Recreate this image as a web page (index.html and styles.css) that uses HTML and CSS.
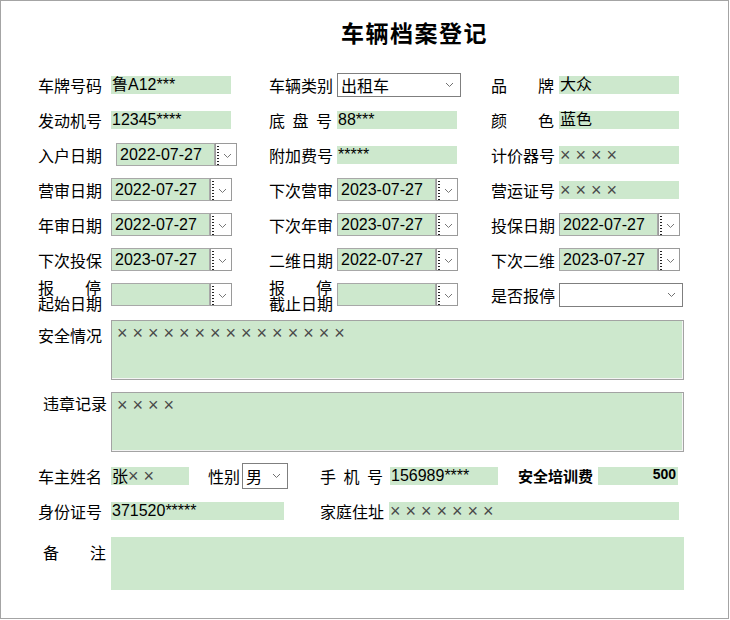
FILE: index.html
```html
<!DOCTYPE html>
<html lang="zh-CN">
<head>
    <meta charset="UTF-8">
    <meta name="viewport" content="width=device-width, initial-scale=1.0">
    <link rel="stylesheet" href="styles.css">
    <title>车辆档案登记</title>
</head>
<body>

<div class="frame">
    <h1 class="title">车辆档案登记</h1>

    <div class="grid">
        <!-- row 1 -->
        <div class="cell c1"><label class="lbl">车牌号码</label><span class="box">鲁A12***</span></div>
        <div class="cell"><label class="lbl">车辆类别</label>
            <span class="select">出租车<svg class="chev" width="9" height="6" viewBox="0 0 9 6"><path d="M1 1l3.5 3.5L8 1"/></svg></span></div>
        <div class="cell"><label class="lbl spread">品牌</label><span class="box">大众</span></div>

        <!-- row 2 -->
        <div class="cell c1"><label class="lbl">发动机号</label><span class="box">12345****</span></div>
        <div class="cell"><label class="lbl spread">底盘号</label><span class="box">88***</span></div>
        <div class="cell"><label class="lbl spread">颜色</label><span class="box">蓝色</span></div>

        <!-- row 3 -->
        <div class="cell c1"><label class="lbl">入户日期</label>
            <span class="date nudge"><span class="dval">2022-07-27</span><span class="dbtn"></span></span></div>
        <div class="cell"><label class="lbl">附加费号</label><span class="box">*****</span></div>
        <div class="cell"><label class="lbl">计价器号</label><span class="box"><span class="mask">××××</span></span></div>

        <!-- row 4 -->
        <div class="cell c1"><label class="lbl">营审日期</label>
            <span class="date"><span class="dval">2022-07-27</span><span class="dbtn"></span></span></div>
        <div class="cell"><label class="lbl">下次营审</label>
            <span class="date"><span class="dval">2023-07-27</span><span class="dbtn"></span></span></div>
        <div class="cell"><label class="lbl">营运证号</label><span class="box"><span class="mask">××××</span></span></div>

        <!-- row 5 -->
        <div class="cell c1"><label class="lbl">年审日期</label>
            <span class="date"><span class="dval">2022-07-27</span><span class="dbtn"></span></span></div>
        <div class="cell"><label class="lbl">下次年审</label>
            <span class="date"><span class="dval">2023-07-27</span><span class="dbtn"></span></span></div>
        <div class="cell"><label class="lbl">投保日期</label>
            <span class="date"><span class="dval">2022-07-27</span><span class="dbtn"></span></span></div>

        <!-- row 6 -->
        <div class="cell c1"><label class="lbl">下次投保</label>
            <span class="date"><span class="dval">2023-07-27</span><span class="dbtn"></span></span></div>
        <div class="cell"><label class="lbl">二维日期</label>
            <span class="date"><span class="dval">2022-07-27</span><span class="dbtn"></span></span></div>
        <div class="cell"><label class="lbl">下次二维</label>
            <span class="date"><span class="dval">2023-07-27</span><span class="dbtn"></span></span></div>

        <!-- row 7 -->
        <div class="cell c1"><label class="lbl two"><span class="top">报停</span>起始日期</label>
            <span class="date"><span class="dval"></span><span class="dbtn"></span></span></div>
        <div class="cell"><label class="lbl two"><span class="top">报停</span>截止日期</label>
            <span class="date"><span class="dval"></span><span class="dbtn"></span></span></div>
        <div class="cell"><label class="lbl">是否报停</label>
            <span class="select"><svg class="chev" width="9" height="6" viewBox="0 0 9 6"><path d="M1 1l3.5 3.5L8 1"/></svg></span></div>
    </div>

    <div class="memo-row first">
        <label class="lbl memo-lbl">安全情况</label>
        <div class="memo"><span class="mask">×××××××××××××××</span></div>
    </div>

    <div class="memo-row second">
        <label class="lbl memo-lbl shift">违章记录</label>
        <div class="memo"><span class="mask">××××</span></div>
    </div>

    <div class="line owner">
        <label class="lbl">车主姓名</label>
        <span class="box w78">张<span class="mask">××</span></span>
        <label class="lbl short">性别</label>
        <span class="select sex">男<svg class="chev" width="9" height="6" viewBox="0 0 9 6"><path d="M1 1l3.5 3.5L8 1"/></svg></span>
        <label class="lbl spread phone">手机号</label>
        <span class="box w108">156989****</span>
        <label class="lbl fee">安全培训费</label>
        <span class="box fee-val">500</span>
    </div>

    <div class="line idcard">
        <label class="lbl">身份证号</label>
        <span class="box w173">371520*****</span>
        <label class="lbl addr">家庭住址</label>
        <span class="box w290"><span class="mask">×××××××</span></span>
    </div>

    <div class="memo-row remark">
        <label class="lbl spread memo-lbl shift">备注</label>
        <div class="memo flat"></div>
    </div>
</div>

</body>
</html>
```

FILE: styles.css
```css
body {
    margin: 0;
    background-color: #fff;
    color: #000;
    font-family: "Noto Sans CJK SC", sans-serif;
    font-size: 16px;
}

.frame {
    width: 729px;
    height: 619px;
    box-sizing: border-box;
    border: 1px solid #a4a4a4;
}

.title {
    margin: 0;
    height: 50px;
    padding: 16px 0 0 340px;
    font-size: 23px;
    line-height: 30px;
    font-weight: bold;
    letter-spacing: 1.5px;
}

/* upper block: three columns of label + control */
.grid {
    display: grid;
    grid-template-columns: 231px 222px 238px;
    grid-auto-rows: 35px;
    margin-left: 37px;
}

.cell {
    display: flex;
    align-items: center;
    gap: 5px;
}

.c1 {
    gap: 10px;
}

.lbl {
    flex: none;
    width: 63px;
    line-height: 22px;
    white-space: nowrap;
}

.spread {
    text-align: justify;
    text-align-last: justify;
}

.two {
    line-height: 16px;
}

.two .top {
    display: block;
    text-align-last: justify;
}

/* green text fields */
.box {
    flex: none;
    display: block;
    width: 120px;
    height: 18px;
    padding-left: 1px;
    box-sizing: border-box;
    background-color: #cde8cd;
    font-family: "Liberation Sans", "Noto Sans CJK SC", sans-serif;
    font-size: 16px;
    line-height: 18px;
    white-space: nowrap;
}

.mask {
    color: #4a4a4a;
    font-family: "Liberation Sans", sans-serif;
    font-size: 18px;
    line-height: 18px;
    letter-spacing: 5px;
}

.select {
    flex: none;
    display: flex;
    align-items: center;
    width: 124px;
    height: 24px;
    box-sizing: border-box;
    padding: 0 6px 0 3px;
    border: 1px solid #7f7f7f;
    background-color: #fff;
    font-size: 16px;
}

.chev {
    margin-left: auto;
}

.chev path {
    fill: none;
    stroke: #707070;
    stroke-width: 1;
}

/* date picker: value + drop button */
.date {
    flex: none;
    display: flex;
    height: 23px;
}

.nudge {
    margin-left: 5px;
}

.dval {
    width: 99px;
    box-sizing: border-box;
    border: 1px solid #a8a8a8;
    background-color: #cde8cd;
    padding-left: 3px;
    font-family: "Liberation Sans", sans-serif;
    font-size: 16px;
    line-height: 21px;
}

.dbtn {
    width: 22px;
    box-sizing: border-box;
    border: 1px solid #9a9a9a;
    background-color: #fff;
    background-image:
        radial-gradient(circle, #222 0.6px, transparent 0.8px),
        url("data:image/svg+xml;utf8,<svg xmlns='http://www.w3.org/2000/svg' width='9' height='6'><path d='M1 1l3.5 3.5L8 1' fill='none' stroke='%23777'/></svg>");
    background-size: 2px 3px, 9px 6px;
    background-repeat: repeat-y, no-repeat;
    background-position: 1px 7px, 7px 9px;
}

/* multi-line areas */
.memo-row {
    display: flex;
    align-items: flex-start;
    margin-left: 37px;
}

.first {
    margin-top: 8px;
}

.second {
    margin-top: 12px;
}

.memo-lbl {
    margin-right: 10px;
    padding-top: 4px;
}

.second .memo-lbl {
    padding-top: 0;
}

.shift {
    margin-left: 5px;
    margin-right: 5px;
}

.memo {
    width: 573px;
    height: 60px;
    box-sizing: border-box;
    border: 1px solid #a3a3a3;
    box-shadow: inset -1px -1px 0 #f4f4f4;
    background-color: #cde8cd;
    padding: 1px 5px;
    font-size: 16px;
    line-height: 20px;
}

.memo.flat {
    height: 53px;
    border: none;
    box-shadow: none;
}

.remark {
    margin-top: 13px;
}

/* owner rows */
.line {
    display: flex;
    align-items: center;
    height: 26px;
    margin-left: 37px;
}

.owner {
    margin-top: 11px;
}

.idcard {
    margin-top: 9px;
}

.line .lbl {
    margin-right: 10px;
}

.w78 { width: 78px; }
.w108 { width: 108px; }
.w173 { width: 173px; }
.w290 { width: 290px; }

.short {
    width: 32px;
    margin-left: 19px;
}

.line .short {
    margin-right: 2px;
}

.sex {
    width: 46px;
    height: 26px;
    padding-right: 6px;
}

.phone {
    margin-left: 32px;
}

.line .phone {
    margin-right: 7px;
}

.fee {
    width: 75px;
    margin-left: 20px;
    font-size: 15px;
    font-weight: bold;
}

.line .fee {
    margin-right: 5px;
}

.fee-val {
    width: 80px;
    align-self: center;
    text-align: right;
    padding-right: 2px;
    font-weight: bold;
    font-size: 14px;
    line-height: 14px;
}

.addr {
    margin-left: 36px;
}

.line .addr {
    margin-right: 6px;
}
```
